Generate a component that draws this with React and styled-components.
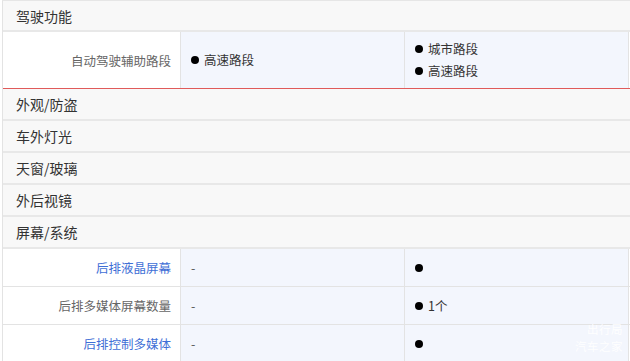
import React from "react";
import styled, { createGlobalStyle } from "styled-components";

const Global = createGlobalStyle`
  html, body { margin: 0; padding: 0; background: #fff; overflow: hidden; }
  body { font-family: "Microsoft YaHei", "Noto Sans CJK SC", "Noto Sans", sans-serif; }
`;

const Page = styled.div`
  position: relative;
  width: 630px;
  height: 361px;
  overflow: hidden;
`;

const Table = styled.div`
  margin-left: 2px;
  width: 630px;
  border-left: 1px solid #e3e3e3;
  border-top: 1px solid #e6e6e6;
  display: flex;
  flex-direction: column;
`;

const Section = styled.div`
  height: ${(p) => p.$h || 30}px;
  background: #f8f8f8;
  border-bottom: 2px solid #e8e8e8;
  padding-left: 13px;
  display: flex;
  align-items: center;
  font-size: 14px;
  color: #333;
`;

const Row = styled.div`
  display: grid;
  grid-template-columns: 178px 224px 224px;
  height: ${(p) => p.$h}px;
  border-bottom: 1px solid ${(p) => (p.$accent ? "#e05a5a" : "#e3e3e3")};
`;

const Label = styled.div`
  background: #fff;
  border-right: 1px solid #e3e3e3;
  display: flex;
  align-items: center;
  justify-content: flex-end;
  padding-right: 9px;
  font-size: 12.5px;
  color: ${(p) => (p.$link ? "#3f6fd6" : "#666")};
`;

const Cell = styled.div`
  background: #f3f6fd;
  border-right: 1px solid #e3e3e3;
  display: flex;
  flex-direction: column;
  justify-content: center;
  padding-left: 10px;
  font-size: 12.5px;
  color: #333;
  line-height: 22px;
`;

const Item = styled.div`
  display: flex;
  align-items: center;
`;

const Dot = styled.span`
  width: 8px;
  height: 8px;
  border-radius: 50%;
  background: #000;
  margin-right: 5px;
  flex: none;
`;

const Dash = styled.span`
  color: #555;
`;

const Watermark = styled.div`
  position: absolute;
  right: 7px;
  bottom: 6px;
  display: flex;
  flex-direction: column;
  align-items: flex-end;
  color: rgba(255, 255, 255, 0.95);
  font-size: 11.5px;
  line-height: 17px;
  letter-spacing: 0.5px;
`;

const Value = ({ v }) => {
  if (v === "-") return <Dash>-</Dash>;
  return (
    <Item>
      <Dot />
      {v}
    </Item>
  );
};

export default function App() {
  return (
    <Page>
      <Global />
      <Table>
        <Section $h={29}>驾驶功能</Section>
        <Row $h={56} $accent>
          <Label>自动驾驶辅助路段</Label>
          <Cell>
            <Value v="高速路段" />
          </Cell>
          <Cell>
            <Value v="城市路段" />
            <Value v="高速路段" />
          </Cell>
        </Row>
        <Section>外观/防盗</Section>
        <Section>车外灯光</Section>
        <Section>天窗/玻璃</Section>
        <Section>外后视镜</Section>
        <Section>屏幕/系统</Section>
        <Row $h={37}>
          <Label $link>后排液晶屏幕</Label>
          <Cell>
            <Value v="-" />
          </Cell>
          <Cell>
            <Value v="" />
          </Cell>
        </Row>
        <Row $h={37}>
          <Label>后排多媒体屏幕数量</Label>
          <Cell>
            <Value v="-" />
          </Cell>
          <Cell>
            <Value v="1个" />
          </Cell>
        </Row>
        <Row $h={37}>
          <Label $link>后排控制多媒体</Label>
          <Cell>
            <Value v="-" />
          </Cell>
          <Cell>
            <Value v="" />
          </Cell>
        </Row>
      </Table>
      <Watermark>
        <span>出行局</span>
        <span>汽车之家</span>
      </Watermark>
    </Page>
  );
}
